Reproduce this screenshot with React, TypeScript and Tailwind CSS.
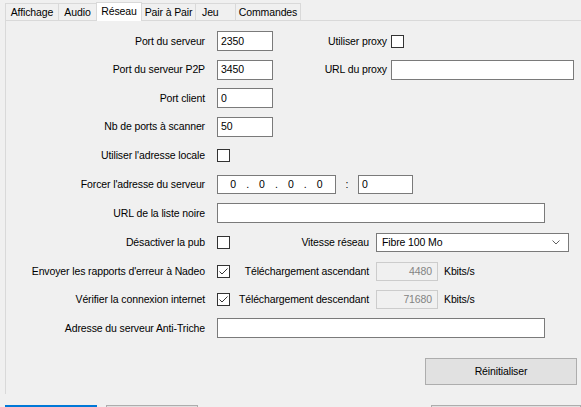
import React from "react";

const Check = ({ checked }: { checked?: boolean }) => (
  <div className="w-[13px] h-[13px] border border-[#333333] bg-white flex items-center justify-center shrink-0">
    {checked && (
      <svg width="11" height="11" viewBox="0 0 11 11">
        <polyline points="1.5,5.5 4,8 9.5,2.5" fill="none" stroke="#333333" strokeWidth="1" />
      </svg>
    )}
  </div>
);

const Input = ({ w, value, h = "h-[20px]" }: { w: string; value?: string; h?: string }) => (
  <div className={`${w} ${h} border border-[#7a7a7a] bg-white flex items-center pl-[3px] shrink-0`}>
    {value}
  </div>
);

const Label = ({ children }: { children: React.ReactNode }) => (
  <div className="w-[199px] text-right shrink-0 mr-[12px] whitespace-nowrap">{children}</div>
);

export default function App() {
  const tabs = [
    { t: "Affichage", w: "w-[54px] justify-center" },
    { t: "Audio", w: "w-[39px] justify-center" },
    { t: "Réseau", w: "w-[46px] justify-center", sel: true },
    { t: "Pair à Pair", w: "w-[55px] justify-center" },
    { t: "Jeu", w: "w-[41px] pl-[6px]" },
    { t: "Commandes", w: "w-[66px] justify-center" },
  ];
  return (
    <div className="w-[581px] h-[407px] bg-[#f0f0f0] overflow-hidden font-['Liberation_Sans',sans-serif] text-[10.5px] tracking-[-0.12px] text-black leading-none">
      {/* tabs */}
      <div className="flex items-end pl-[5px] pt-[2px] h-[21px] relative z-10">
        {tabs.map((tab, i) => (
          <div
            key={tab.t}
            className={
              tab.sel
                ? `${tab.w} h-[19px] bg-white border border-b-0 border-[#d9d9d9] -ml-px flex items-center pb-[1px] whitespace-nowrap`
                : `${tab.w} h-[17px] mb-[1px] bg-[#f0f0f0] border border-b-0 border-[#d9d9d9] ${i === 0 ? "" : "-ml-px"} flex items-center whitespace-nowrap`
            }
          >
            {tab.t}
          </div>
        ))}
      </div>
      {/* panel */}
      <div className="ml-[5px] -mt-px w-[600px] h-[374px] border-l border-t border-[#d9d9d9] pt-[6px] flex flex-col">
        <div className="h-[28px] flex items-center">
          <Label>Port du serveur</Label>
          <Input w="w-[56px]" value="2350" />
          <div className="w-[114px] text-right mr-[4px] whitespace-nowrap">Utiliser proxy</div>
          <Check />
        </div>
        <div className="h-[29px] flex items-center">
          <Label>Port du serveur P2P</Label>
          <Input w="w-[56px]" value="3450" />
          <div className="w-[114px] text-right mr-[4px] whitespace-nowrap">URL du proxy</div>
          <Input w="w-[183px]" />
        </div>
        <div className="h-[28px] flex items-center">
          <Label>Port client</Label>
          <Input w="w-[56px]" value="0" />
        </div>
        <div className="h-[29px] flex items-center">
          <Label>Nb de ports à scanner</Label>
          <Input w="w-[56px]" value="50" />
        </div>
        <div className="h-[28px] flex items-center">
          <Label>Utiliser l'adresse locale</Label>
          <Check />
        </div>
        <div className="h-[30px] flex items-center">
          <Label>Forcer l'adresse du serveur</Label>
          <div className="w-[119px] h-[19px] border border-[#7a7a7a] bg-white flex items-center pl-[8px] shrink-0">
            {["0", ".", "0", ".", "0", ".", "0"].map((c, i) => (
              <span key={i} className="w-[14.4px] text-center">{c}</span>
            ))}
          </div>
          <div className="w-[22px] text-center">:</div>
          <Input w="w-[55px]" h="h-[19px]" value="0" />
        </div>
        <div className="h-[28px] flex items-center">
          <Label>URL de la liste noire</Label>
          <Input w="w-[328px]" />
        </div>
        <div className="h-[30px] flex items-center">
          <Label>Désactiver la pub</Label>
          <Check />
          <div className="w-[139px] text-right mr-[7px] whitespace-nowrap">Vitesse réseau</div>
          <div className="w-[193px] h-[19px] border border-[#7a7a7a] bg-white flex items-center pl-[5px] pr-[8px] justify-between">
            <span>Fibre 100 Mo</span>
            <svg width="8" height="5" viewBox="0 0 8 5">
              <polyline points="0.5,0.5 4,4 7.5,0.5" fill="none" stroke="#606060" strokeWidth="1" />
            </svg>
          </div>
        </div>
        <div className="h-[28px] flex items-center">
          <Label>Envoyer les rapports d'erreur à Nadeo</Label>
          <Check checked />
          <div className="w-[139px] text-right mr-[7px] whitespace-nowrap">Téléchargement ascendant</div>
          <div className="w-[62px] h-[19px] border border-[#cccccc] bg-[#f0f0f0] flex items-center justify-end pr-[5px] text-[#838383]">4480</div>
          <div className="ml-[6px]">Kbits/s</div>
        </div>
        <div className="h-[29px] flex items-center">
          <Label>Vérifier la connexion internet</Label>
          <Check checked />
          <div className="w-[139px] text-right mr-[7px] whitespace-nowrap">Téléchargement descendant</div>
          <div className="w-[62px] h-[19px] border border-[#cccccc] bg-[#f0f0f0] flex items-center justify-end pr-[5px] text-[#838383]">71680</div>
          <div className="ml-[6px]">Kbits/s</div>
        </div>
        <div className="h-[28px] flex items-center">
          <Label>Adresse du serveur Anti-Triche</Label>
          <Input w="w-[328px]" />
        </div>
        <div className="mt-[16px] ml-[419px] w-[152px] h-[27px] bg-[#e1e1e1] border border-[#adadad] flex items-center justify-center">
          Réinitialiser
        </div>
      </div>
      {/* bottom buttons */}
      <div className="flex mt-[11px] pl-[5px]">
        <div className="w-[92px] h-[24px] border-2 border-[#0078d7] bg-[#e1e1e1]" />
        <div className="w-[92px] h-[24px] ml-[9px] border border-[#adadad] bg-[#e1e1e1]" />
        <div className="w-[150px] h-[24px] ml-[233px] border border-[#adadad] bg-[#e1e1e1]" />
      </div>
    </div>
  );
}
